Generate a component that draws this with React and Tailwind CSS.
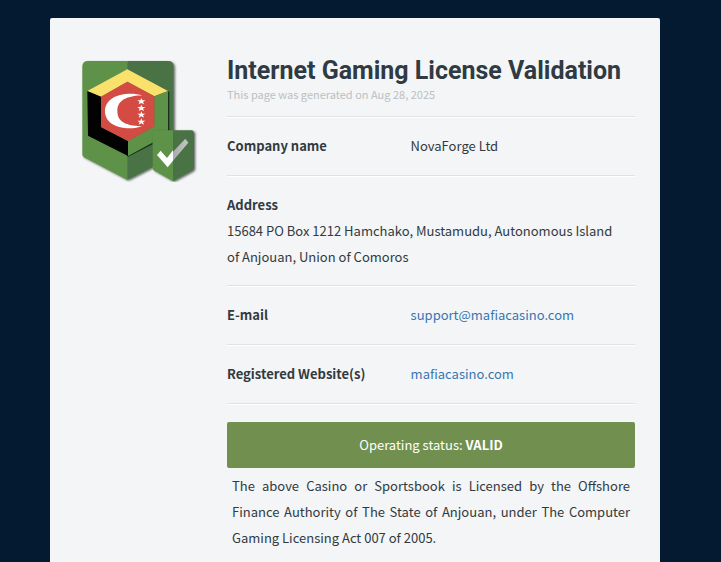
function Logo() {
  return (
    <svg
      viewBox="30 30 360 366"
      className="w-[120px] h-[122px] shrink-0"
      role="img"
      aria-label="Anjouan gaming licence seal"
    >
      <defs>
        <filter id="shadow" x="-10%" y="-10%" width="125%" height="125%">
          <feDropShadow dx="4" dy="3" stdDeviation="3" floodColor="#000" floodOpacity="0.6" />
        </filter>
        <linearGradient id="tick" x1="0" x2="1">
          <stop offset="0" stopColor="#a9aaab" />
          <stop offset="1" stopColor="#c3c5c6" />
        </linearGradient>
      </defs>

      {/* large shield */}
      <g filter="url(#shadow)">
        <path d="M54 33H172V390L42 322Q37 319 37 313V50Q37 33 54 33Z" fill="#5e9249" />
        <path d="M172 33H294Q311 33 311 50V313Q311 319 306 322L172 390Z" fill="#497245" />
      </g>

      {/* hexagon flag */}
      <path d="M173 321L248 283V265L173 303Z" fill="#16321a" />
      <path d="M52 123L172 58L294 123L253 139L172 95L93 140Z" fill="#fae16c" />
      <path d="M52 123L93 140V231L174 273V318L54 257Z" fill="#020202" />
      <path d="M294 123L253 139V229L174 273V318L294 253Z" fill="#5e9249" />
      <path d="M294 123V246H298V127Z" fill="#16321a" />
      <path d="M172 95L253 139V229L174 273L93 231V140Z" fill="#d44b43" />
      <path
        d="M217 136C176 124 105 133 105 184C105 235 177 243 217 229C181 228 142 222 142 184C142 145 180 138 217 136Z"
        fill="#fff"
      />
      {[154, 174, 194, 215].map((y) => (
        <path
          key={y}
          transform={`translate(214 ${y})`}
          d="M0-10L3-3L12-3L5 2L8 9L0 5L-8 9L-5 2L-12-3L-3-3Z"
          fill="#fff"
        />
      ))}

      {/* small shield with tick */}
      <g filter="url(#shadow)">
        <path d="M257 241H309V394L253 362Q248 359 248 353V250Q248 241 257 241Z" fill="#5e9249" />
        <path d="M309 241H363Q372 241 372 250V353Q372 359 367 362L309 394Z" fill="#497245" />
      </g>
      <path d="M261 315L272 302L291 324L309 301V332L293 352Z" fill="#fff" />
      <path d="M309 305L346 266L355 278L309 332Z" fill="url(#tick)" />
    </svg>
  );
}

function Row({ label, children }) {
  return (
    <div className="flex border-b border-[#dfe1e3] shadow-[0_1px_0_#fff] mb-px pt-[15px] pb-4 leading-[26px]">
      <dt className="w-[45%] font-bold">{label}</dt>
      <dd className="flex-1">{children}</dd>
    </div>
  );
}

export default function App() {
  return (
    <div className="min-h-screen bg-[#031a30] pt-[18px] pl-[50px] pr-[61px] font-['Noto_Sans_CJK_SC',sans-serif] text-[13px] text-[#323a40]">
      <main className="flex min-h-[calc(100vh-18px)] items-start gap-[27px] rounded-t-[2px] bg-[#f3f5f7] pt-[42px] pb-6 pl-[30px] pr-[25px]">
        <Logo />
        <div className="min-w-0 flex-1">
          <header className="border-b border-[#dfe1e3] shadow-[0_1px_0_#fff] mb-px pb-3">
            <h1 className="font-[Roboto,sans-serif] text-[25px] leading-[22px] font-bold text-[#2f3a42]">
              Internet Gaming License Validation
            </h1>
            <p className="mt-[2px] text-[11px] leading-5 text-[#bcc0c2]">
              This page was generated on Aug 28, 2025
            </p>
          </header>

          <dl>
            <Row label="Company name">NovaForge Ltd</Row>
            <div className="border-b border-[#dfe1e3] shadow-[0_1px_0_#fff] mb-px py-[15px] leading-[26px]">
              <dt className="font-bold">Address</dt>
              <dd className="pr-3">
                15684 PO Box 1212 Hamchako, Mustamudu, Autonomous Island of Anjouan, Union of Comoros
              </dd>
            </div>
            <Row label="E-mail">
              <a href="mailto:support@mafiacasino.com" className="text-[#3876b0]">
                support@mafiacasino.com
              </a>
            </Row>
            <Row label="Registered Website(s)">
              <a href="https://mafiacasino.com" className="text-[#3876b0]">
                mafiacasino.com
              </a>
            </Row>
          </dl>

          <div className="mt-[18px] rounded-[2px] bg-[#718f4e] py-[10px] text-center leading-[26px] text-white">
            Operating status: <strong>VALID</strong>
          </div>
          <p className="mt-[5px] px-[5px] text-justify leading-[26px]">
            The above Casino or Sportsbook is Licensed by the Offshore Finance Authority of The
            State of Anjouan, under The Computer Gaming Licensing Act 007 of 2005.
          </p>
        </div>
      </main>
    </div>
  );
}
